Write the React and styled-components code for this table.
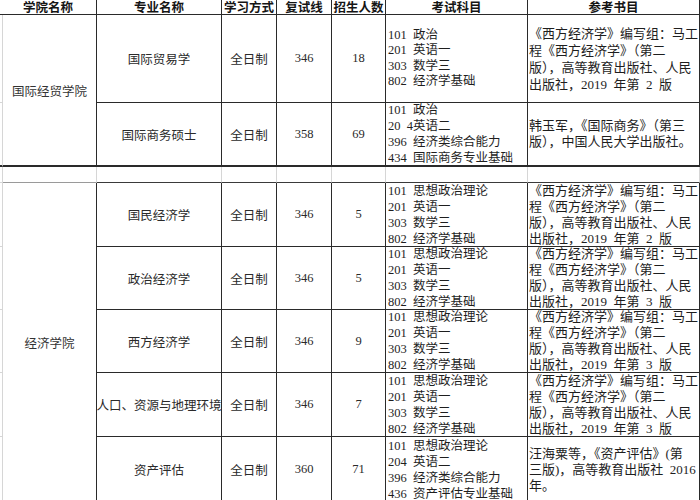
import React from 'react'
import styled, { createGlobalStyle } from 'styled-components'

const GlobalStyle = createGlobalStyle`
    html, body {
        margin: 0;
        padding: 0;
        background: #ffffff;
        overflow: hidden;
    }
    body {
        width: 700px;
        height: 500px;
        font-family: "Liberation Serif", "Noto Sans CJK SC", serif;
        color: #1e1e1e;
    }
`

const LINE = '#2a2a2a'
const GRID = '#d6d6d6'

const Sheet = styled.div`
    display: grid;
    grid-template-columns: 3px 94px 125px 55px 55px 54px 142px 172px;
    grid-template-rows: 15px 88px 64px 16px 64px 63px 63px 64px 66px;
    width: 700px;
    background: #ffffff;
`

const Gutter = styled.div`
    border-right: 1px solid ${GRID};
    border-bottom: ${props => (props.$thick ? `2px solid ${LINE}` : `1px solid ${GRID}`)};
`

const HeadCell = styled.div`
    grid-column: ${props => (props.$wide ? 'span 2' : 'auto')};
    display: flex;
    align-items: center;
    justify-content: center;
    border-right: 1px solid ${LINE};
    border-bottom: 1px solid ${LINE};
    font-family: "Noto Sans CJK SC", sans-serif;
    font-weight: 700;
    font-size: 12.5px;
    line-height: 12.5px;
    white-space: nowrap;
    color: #151515;
`

const CollegeCell = styled.div`
    grid-row: span ${props => props.$span};
    display: flex;
    align-items: center;
    justify-content: center;
    border-right: 1px solid ${LINE};
    border-bottom: ${props => (props.$thick ? `2px solid ${LINE}` : `1px solid ${LINE}`)};
    font-family: "Noto Sans CJK SC", sans-serif;
    font-size: 12.5px;
    color: #333;
`

const Cell = styled.div`
    display: flex;
    align-items: center;
    justify-content: center;
    border-right: 1px solid ${LINE};
    border-bottom: ${props => (props.$thick ? `2px solid ${LINE}` : `1px solid ${LINE}`)};
    font-family: ${props => (props.$cjk ? '"Noto Sans CJK SC", sans-serif' : '"Liberation Serif", serif')};
    font-size: 12.5px;
    white-space: nowrap;
    overflow: visible;
    color: #2a2a2a;
`

const ListCell = styled.div`
    display: flex;
    flex-direction: column;
    justify-content: center;
    padding-left: ${props => props.$pad || 2}px;
    border-right: 1px solid ${LINE};
    border-bottom: ${props => (props.$thick ? `2px solid ${LINE}` : `1px solid ${LINE}`)};
    font-size: ${props => props.$size || 12.5}px;
    line-height: ${props => props.$lh || 16}px;
    white-space: pre;
    overflow: visible;
    color: #1e1e1e;
`

const GapCell = styled.div`
    border-right: 1px solid ${GRID};
    border-bottom: 1px solid ${props => (props.$soft ? '#9a9a9a' : '#3a3a3a')};
`

const headers = ['专业名称', '学习方式', '复试线', '招生人数', '考试科目', '参考书目']

const bookXF = edition => [
    '《西方经济学》编写组：马工',
    '程《西方经济学》（第二',
    '版），高等教育出版社、人民',
    `出版社，2019  年第  ${edition}  版`
]

const examEcon = ['101  思想政治理论', '201  英语一', '303  数学三', '802  经济学基础']

const tradeRows = [
    {
        major: '国际贸易学',
        score: '346',
        quota: '18',
        exams: ['101  政治', '201  英语一', '303  数学三', '802  经济学基础'],
        books: bookXF(2),
        examLh: 15.5,
        bookLh: 17
    },
    {
        major: '国际商务硕士',
        score: '358',
        quota: '69',
        exams: ['101  政治', '20  4英语二', '396  经济类综合能力', '434  国际商务专业基础'],
        books: ['韩玉军，《国际商务》（第三', '版），中国人民大学出版社。'],
        thick: true
    }
]

const econRows = [
    { major: '国民经济学', score: '346', quota: '5', exams: examEcon, books: bookXF(2) },
    { major: '政治经济学', score: '346', quota: '5', exams: examEcon, books: bookXF(3) },
    { major: '西方经济学', score: '346', quota: '9', exams: examEcon, books: bookXF(3) },
    { major: '人口、资源与地理环境', score: '346', quota: '7', exams: examEcon, books: bookXF(3) },
    {
        major: '资产评估',
        score: '360',
        quota: '71',
        exams: ['101  思想政治理论', '204  英语二', '396  经济类综合能力', '436  资产评估专业基础'],
        books: ['汪海粟等，《资产评估》(第', '三版)，高等教育出版社  2016', '年。']
    }
]

const MajorCells = ({ row }) => (
    <>
        <Cell $thick={row.thick} $cjk>
            {row.major}
        </Cell>
        <Cell $thick={row.thick} $cjk>
            全日制
        </Cell>
        <Cell $thick={row.thick}>{row.score}</Cell>
        <Cell $thick={row.thick}>{row.quota}</Cell>
        <ListCell $thick={row.thick} $lh={row.examLh}>
            {row.exams.map(line => (
                <div key={line}>{line}</div>
            ))}
        </ListCell>
        <ListCell $thick={row.thick} $lh={row.bookLh} $size={13} $pad={1}>
            {row.books.map(line => (
                <div key={line}>{line}</div>
            ))}
        </ListCell>
    </>
)

export default function App() {
    return (
        <>
            <GlobalStyle />
            <Sheet>
                <HeadCell $wide>学院名称</HeadCell>
                {headers.map(h => (
                    <HeadCell key={h}>{h}</HeadCell>
                ))}

                {tradeRows.map((row, i) => (
                    <React.Fragment key={row.major}>
                        <Gutter $thick={row.thick} />
                        {i === 0 && (
                            <CollegeCell $span={2} $thick>
                                国际经贸学院
                            </CollegeCell>
                        )}
                        <MajorCells row={row} />
                    </React.Fragment>
                ))}

                <Gutter />
                <GapCell $soft />
                <GapCell />
                <GapCell />
                <GapCell />
                <GapCell />
                <GapCell />
                <GapCell />

                {econRows.map((row, i) => (
                    <React.Fragment key={row.major}>
                        <Gutter />
                        {i === 0 && <CollegeCell $span={5}>经济学院</CollegeCell>}
                        <MajorCells row={row} />
                    </React.Fragment>
                ))}
            </Sheet>
        </>
    )
}
